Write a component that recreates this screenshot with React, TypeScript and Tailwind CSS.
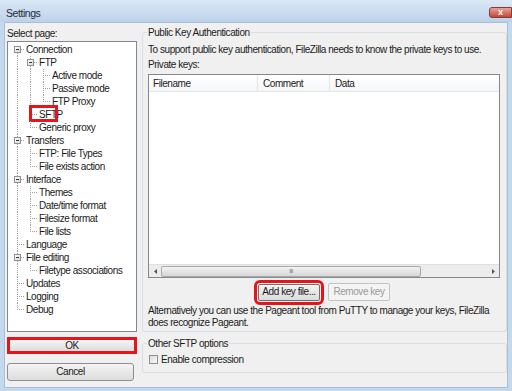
import React from 'react';

type Node = { label: string; lv: number; exp?: boolean; sel?: boolean };

const tree: Node[] = [
  { label: 'Connection', lv: 0, exp: true },
  { label: 'FTP', lv: 1, exp: true },
  { label: 'Active mode', lv: 2 },
  { label: 'Passive mode', lv: 2 },
  { label: 'FTP Proxy', lv: 2 },
  { label: 'SFTP', lv: 1, sel: true },
  { label: 'Generic proxy', lv: 1 },
  { label: 'Transfers', lv: 0, exp: true },
  { label: 'FTP: File Types', lv: 1 },
  { label: 'File exists action', lv: 1 },
  { label: 'Interface', lv: 0, exp: true },
  { label: 'Themes', lv: 1 },
  { label: 'Date/time format', lv: 1 },
  { label: 'Filesize format', lv: 1 },
  { label: 'File lists', lv: 1 },
  { label: 'Language', lv: 0 },
  { label: 'File editing', lv: 0, exp: true },
  { label: 'Filetype associations', lv: 1 },
  { label: 'Updates', lv: 0 },
  { label: 'Logging', lv: 0 },
  { label: 'Debug', lv: 0 },
];

function hasNext(i: number) {
  for (let j = i + 1; j < tree.length; j++) {
    if (tree[j].lv < tree[i].lv) return false;
    if (tree[j].lv === tree[i].lv) return true;
  }
  return false;
}

function ancestor(i: number, lv: number) {
  for (let j = i - 1; j >= 0; j--) if (tree[j].lv === lv) return j;
  return -1;
}

function TreeRow({ node, i }: { node: Node; i: number }) {
  const cols = [];
  for (let c = 0; c < node.lv; c++) {
    const a = ancestor(i, c);
    cols.push(
      <span key={c} className="relative w-[13px] h-[13px] shrink-0">
        {a >= 0 && hasNext(a) && (
          <span className="absolute left-[6px] top-0 h-[13px] border-l border-dotted border-[#a0a0a0]" />
        )}
      </span>
    );
  }
  const next = hasNext(i);
  return (
    <div className="flex items-center h-[13px] whitespace-nowrap">
      {cols}
      <span className="relative w-[13px] h-[13px] shrink-0">
        <span
          className={`absolute left-[6px] border-l border-dotted border-[#a0a0a0] ${i === 0 ? 'top-[6px]' : 'top-0'} ${next ? 'bottom-0' : 'h-[7px]'}`}
        />
        <span className="absolute left-[6px] top-[6px] w-[7px] border-t border-dotted border-[#a0a0a0]" />
        {node.exp && (
          <span className="absolute left-[3px] top-[3px] w-[7px] h-[7px] border border-[#919191] bg-gradient-to-br from-white to-[#d8d8d8] flex items-center justify-center">
            <span className="w-[3px] h-px bg-[#333]" />
          </span>
        )}
      </span>
      <span className="relative ml-[2px] text-[#1b1b1b]">
        {node.label}
        {node.sel && (
          <span className="absolute left-[-10px] top-[-3px] w-[29px] h-[17px] border-[3px] border-[#e8141c]" />
        )}
      </span>
    </div>
  );
}

function Arrow({ dir }: { dir: 'l' | 'r' }) {
  return (
    <svg width="3" height="5" viewBox="0 0 3 5">
      {dir === 'l' ? <path d="M3 0 L0 2.5 L3 5 Z" fill="#555" /> : <path d="M0 0 L3 2.5 L0 5 Z" fill="#555" />}
    </svg>
  );
}

export default function App() {
  return (
    <div className="w-[512px] h-[391px] overflow-hidden flex flex-col bg-[#c4d8ee] font-['Liberation_Sans',Arial,sans-serif] text-[10px] tracking-[-0.45px] leading-[13px] text-[#1b1b1b]">
      {/* title bar */}
      <div className="h-[22px] shrink-0 flex items-start justify-between bg-gradient-to-b from-[#dbe8f6] to-[#bcd2ea] pl-[6px]">
        <span className="mt-[7px] text-[#1e2a3a] text-[10.5px]">Settings</span>
        <div className="w-[23px] h-[11px] mt-[7px] rounded-l-[3px] border border-[#8a3a35] bg-gradient-to-b from-[#e6a394] to-[#c0453a] flex items-center justify-center">
          <span className="text-white text-[9px] leading-none font-bold tracking-normal">x</span>
        </div>
      </div>

      {/* body */}
      <div className="flex-1 mx-[4px] mb-[3px] bg-[#f0f0f0] border border-[#a9bfd8] flex pl-[2px]">
        {/* left column */}
        <div className="w-[130px] flex flex-col">
          <div className="h-[18px] pt-[4px]">Select page:</div>
          <div className="h-[291px] border border-[#828790] bg-white pl-[3px] pt-px">
            {tree.map((n, i) => (
              <TreeRow key={n.label} node={n} i={i} />
            ))}
          </div>
          <button className="mt-[5px] h-[17px] w-[130px] border-[3px] border-[#e8141c] bg-gradient-to-b from-[#f6f6f6] to-[#dcdcdc] flex items-center justify-center leading-none">
            OK
          </button>
          <button className="mt-[9px] h-[18px] w-[127px] rounded-[3px] border border-[#8e8f8f] bg-gradient-to-b from-[#f4f4f4] to-[#dddddd] flex items-center justify-center leading-none">
            Cancel
          </button>
        </div>

        {/* right column */}
        <div className="w-[365px] ml-[5px] flex flex-col">
          <div className="relative mt-[9px] h-[300px] border border-[#d5dfe5] rounded-[3px] px-[5px] pt-[10px]">
            <span className="absolute left-[4px] top-[-7px] px-px bg-[#f0f0f0]">Public Key Authentication</span>
            <div className="whitespace-nowrap">To support public key authentication, FileZilla needs to know the private keys to use.</div>
            <div className="mt-[2px]">Private keys:</div>
            <div className="mt-[3px] w-[352px] h-[204px] border border-[#828790] bg-white flex flex-col">
              <div className="h-[17px] flex items-center bg-gradient-to-b from-white to-[#f4f5f7] border-b border-[#e3e5e8]">
                <div className="w-[109px] pl-[4px] border-r border-[#e3e5e8] h-full flex items-center">Filename</div>
                <div className="w-[72px] pl-[5px] border-r border-[#e3e5e8] h-full flex items-center">Comment</div>
                <div className="pl-[5px]">Data</div>
              </div>
              <div className="flex-1" />
              <div className="h-[13px] flex items-center bg-[#ececec] border-t border-[#e0e0e0]">
                <div className="w-[12px] flex justify-center"><Arrow dir="l" /></div>
                <div className="w-[260px] h-[11px] rounded-[2px] border border-[#a9a9a9] bg-gradient-to-b from-[#f3f3f3] to-[#d6d6d6] flex items-center justify-center">
                  <span className="text-[6px] leading-none text-[#666] tracking-[-0.5px]">III</span>
                </div>
                <div className="flex-1" />
                <div className="w-[12px] flex justify-center"><Arrow dir="r" /></div>
              </div>
            </div>
            <div className="mt-[5px] w-[352px] flex justify-center gap-[8px] items-center">
              <button className="h-[17px] w-[62px] whitespace-nowrap rounded-[2px] border border-[#707070] bg-gradient-to-b from-[#f2f2f2] to-[#dcdcdc] outline-[3px] outline-solid outline-[#e8141c] outline-offset-1 flex items-center justify-center leading-none">
                Add key file...
              </button>
              <button className="h-[18px] w-[62px] whitespace-nowrap rounded-[2px] border border-[#c4c4c4] bg-[#f4f4f4] text-[#9a9a9a] flex items-center justify-center leading-none">
                Remove key
              </button>
            </div>
            <div className="mt-[4px] leading-[12px] whitespace-nowrap">
              Alternatively you can use the Pageant tool from PuTTY to manage your keys, FileZilla
              <br />
              does recognize Pageant.
            </div>
          </div>

          <div className="relative mt-[11px] h-[30px] border border-[#d5dfe5] rounded-[3px] px-[6px] pt-[9px]">
            <span className="absolute left-[4px] top-[-7px] px-px bg-[#f0f0f0]">Other SFTP options</span>
            <div className="flex items-center gap-[3px]">
              <span className="w-[9px] h-[9px] border border-[#8f8f8f] bg-gradient-to-br from-[#dcdcdc] to-[#f8f8f8]" />
              <span>Enable compression</span>
            </div>
          </div>
        </div>
      </div>
    </div>
  );
}
